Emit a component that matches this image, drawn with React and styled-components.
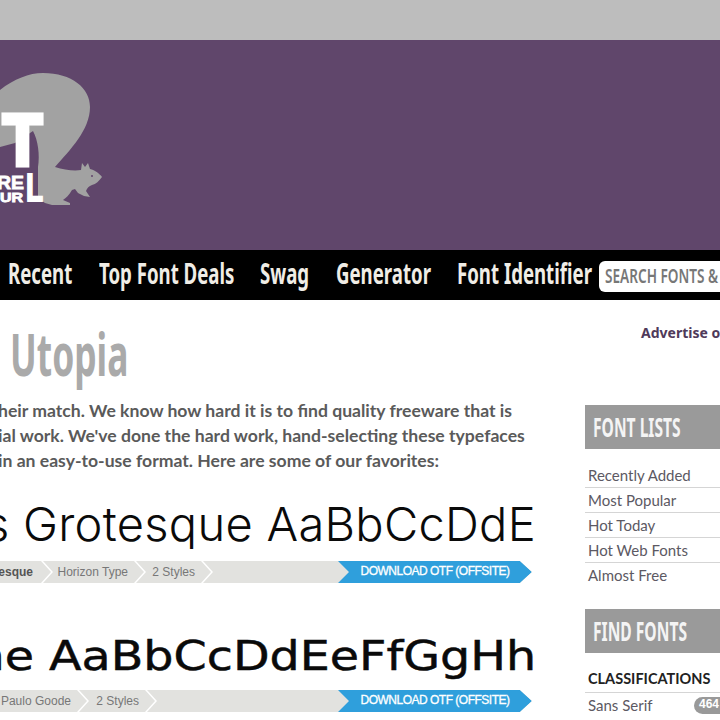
import React from 'react';
import styled, { createGlobalStyle } from 'styled-components';

const Global = createGlobalStyle`
    html, body {
        margin: 0;
        padding: 0;
        background: #fff;
        overflow: hidden;
    }
`;

const narrow = `'Noto Sans', 'Open Sans', sans-serif`;
const body = `'Lato', 'Noto Sans', sans-serif`;
const arial = `'Liberation Sans', Arial, sans-serif`;

const Page = styled.div`
    width: 720px;
    height: 720px;
    overflow: hidden;
`;

const TopBar = styled.div`
    height: 40px;
    background: #bdbdbd;
`;

const Header = styled.header`
    height: 210px;
    background: #60466b;
`;

const LogoArt = styled.svg`
    display: block;
    width: 110px;
    height: 210px;
`;

// no condensed family is installed, so the headline face is squeezed horizontally
const Squeeze = styled.span`
    display: block;
    white-space: nowrap;
    transform: scaleX(${p => p.$k});
    transform-origin: ${p => p.$origin || 'left'} center;
`;

const Nav = styled.nav`
    height: 50px;
    background: #000;
    display: flex;
    align-items: center;
    padding-left: 8px;
    white-space: nowrap;
`;

const NavItem = styled.a`
    flex: none;
    width: ${p => p.$width}px;
    margin-right: 26.5px;
    margin-bottom: 4px;
    font-family: ${narrow};
    font-weight: 700;
    font-size: 28px;
    line-height: 38px;
    color: #f0ede6;
    &:last-of-type {
        margin-right: 6px;
    }
`;

const Search = styled.div`
    flex: none;
    width: 140px;
    height: 31px;
    margin-top: 2px;
    background: #fff;
    border-radius: 6px;
    padding-left: 6px;
    box-sizing: border-box;
    font-family: ${narrow};
    font-weight: 600;
    font-size: 20px;
    line-height: 30px;
    color: #777;
`;

const Main = styled.div`
    display: flex;
    height: 420px;
`;

const Content = styled.main`
    width: 585px;
    flex: none;
    overflow: hidden;
`;

const Title = styled.h1`
    margin: 22px 0 0 10px;
    font-family: ${narrow};
    font-weight: 700;
    font-size: 60px;
    line-height: 62px;
    color: #aaa;
`;

const Intro = styled.p`
    margin: 14px 0 0;
    width: 560px;
    font-family: ${body};
    font-weight: 700;
    font-size: 17.6px;
    line-height: 25px;
    color: #5a5a5a;
    white-space: nowrap;
`;

const Line = styled.span`
    display: block;
    margin-left: ${p => p.$shift}px;
`;

const Specimen = styled.div`
    margin-top: ${p => p.$top}px;
    width: 536px;
    height: 52px;
    display: flex;
    justify-content: flex-end;
    align-items: center;
    font-family: ${p => p.$family};
    font-weight: ${p => p.$weight};
    font-size: ${p => p.$size}px;
    letter-spacing: ${p => p.$spacing}px;
    -webkit-text-stroke: ${p => p.$stroke}px #0a0a0a;
    color: #0a0a0a;
    white-space: nowrap;
    overflow: hidden;
`;

const Crumbs = styled.div`
    margin-top: ${p => p.$top}px;
    width: 532px;
    height: 22px;
    display: flex;
    align-items: center;
    background: #e2e2df;
    clip-path: polygon(0 0, 520px 0, 532px 50%, 520px 100%, 0 100%);
`;

const Crumb = styled.span`
    font-family: ${arial};
    font-size: 12px;
    font-weight: ${p => (p.$strong ? 700 : 400)};
    color: ${p => (p.$strong ? '#555' : '#777')};
    flex: none;
    width: ${p => p.$width}px;
    height: 22px;
    line-height: 22px;
    box-sizing: border-box;
    display: flex;
    justify-content: flex-end;
    white-space: nowrap;
    padding-right: ${p => (p.$strong ? 20 : 18)}px;
    position: relative;
    &::after {
        content: '';
        position: absolute;
        right: 0;
        top: 0;
        width: 12px;
        height: 22px;
        background: #fff;
        clip-path: polygon(0 0, 2px 0, 12px 50%, 2px 100%, 0 100%, 10px 50%);
    }
`;

const Download = styled.a`
    margin-left: auto;
    width: 194px;
    height: 22px;
    background: #2f9fdc;
    clip-path: polygon(0 0, 182px 0, 194px 50%, 182px 100%, 0 100%, 11px 50%);
    font-family: ${arial};
    font-size: 12px;
    letter-spacing: -0.5px;
    line-height: 21px;
    color: #fff;
    text-align: center;
    white-space: nowrap;
    -webkit-text-stroke: 0.3px #fff;
`;

const Aside = styled.aside`
    flex: 1;
    min-width: 0;
    overflow: hidden;
`;

const Advertise = styled.div`
    margin: 24px 0 0 56px;
    font-family: 'Noto Sans', sans-serif;
    font-weight: 700;
    font-size: 14px;
    line-height: 18px;
    color: #4f3a5a;
    white-space: nowrap;
`;

const BoxTitle = styled.div`
    margin-top: ${p => p.$top}px;
    height: 44px;
    padding-left: 8px;
    background: #9a9a9a;
    font-family: ${narrow};
    font-weight: 700;
    font-size: 26px;
    line-height: 45px;
    color: #f4f4f4;
`;

const List = styled.ul`
    list-style: none;
    margin: 14px 0 0;
    padding: 0;
`;

const Item = styled.li`
    height: 25px;
    box-sizing: border-box;
    padding-left: 3px;
    border-bottom: 1px solid #d5d5d5;
    font-family: ${body};
    font-size: 15px;
    line-height: 24px;
    color: #5c5963;
    display: flex;
    justify-content: space-between;
    &:last-child {
        border-bottom: none;
    }
`;

const Heading = styled(Item)`
    height: 26px;
    font-size: 14.5px;
    font-weight: 700;
    color: #222;
`;

const Count = styled.span`
    height: 17px;
    margin-top: 4px;
    padding: 0 1px 0 5px;
    border-radius: 9px 0 0 9px;
    background: #999;
    font-family: ${arial};
    font-weight: 700;
    font-size: 12px;
    line-height: 15px;
    color: #fff;
`;

const navItems = [
    { label: 'Recent', width: 64 },
    { label: 'Top Font Deals', width: 135 },
    { label: 'Swag', width: 49 },
    { label: 'Generator', width: 95 },
    { label: 'Font Identifier', width: 136 },
];

const fonts = [
    {
        top: 24,
        gap: 12,
        text: 's Grotesque AaBbCcDdE',
        family: `'Inter', sans-serif`,
        weight: 300,
        size: 47,
        spacing: 0.3,
        stretch: 1,
        stroke: 0,
        crumbs: [
            { label: 'tesque', width: 53, strong: true },
            { label: 'Horizon Type', width: 93 },
            { label: '2 Styles', width: 67 },
        ],
    },
    {
        top: 47,
        gap: 8,
        text: 'ne AaBbCcDdEeFfGgHh',
        family: `'DejaVu Sans', sans-serif`,
        weight: 400,
        size: 41,
        spacing: 0,
        stretch: 1.16,
        stroke: 0.5,
        crumbs: [
            { label: 'Paulo Goode', width: 89 },
            { label: '2 Styles', width: 68 },
        ],
    },
];

const lists = ['Recently Added', 'Most Popular', 'Hot Today', 'Hot Web Fonts', 'Almost Free'];

export default function App() {
    return (
        <Page>
            <Global />
            <TopBar />
            <Header>
                <LogoArt viewBox="0 40 110 210">
                    <path
                        fill="#a2a2a2"
                        d="M0 90C14 79 29 73 43 73C72 73 90 88 90 107C90 130 70 150 55 167C64 170 74 171 81 170L82 163L85 167L88 163L90 169C95 170 100 174 102 177C99 181 96 184 92 185C89 186 87 188 86 191L90 197L84 196L78 193L75 189L72 190C69 195 66 198 63 200L70 203L70 205L52 205L45 203L38 198L38 167C40 155 38 140 33 131L15 143L0 147Z"
                    />
                    <circle cx="92" cy="176" r="1" fill="#60466b" />
                    <text x="3" y="165" textLength="39" lengthAdjust="spacingAndGlyphs" fontFamily="Liberation Sans" fontWeight="700" fontSize="72" fill="#fff" stroke="#fff" strokeWidth="5">T</text>
                    <text x="-3" y="189" textLength="27" lengthAdjust="spacingAndGlyphs" fontFamily="Liberation Sans" fontWeight="700" fontSize="19" fill="#fff" stroke="#fff" strokeWidth="0.8">RE</text>
                    <text x="0" y="202" textLength="23" lengthAdjust="spacingAndGlyphs" fontFamily="Liberation Sans" fontWeight="700" fontSize="12" fill="#fff" stroke="#fff" strokeWidth="0.8">UR</text>
                    <text x="26" y="201" textLength="17" lengthAdjust="spacingAndGlyphs" fontFamily="Liberation Sans" fontWeight="700" fontSize="38" fill="#fff" stroke="#fff" strokeWidth="2">L</text>
                </LogoArt>
            </Header>
            <Nav>
                {navItems.map(item => (
                    <NavItem key={item.label} $width={item.width}>
                        <Squeeze $k={0.665}>{item.label}</Squeeze>
                    </NavItem>
                ))}
                <Search>
                    <Squeeze $k={0.68}>SEARCH FONTS &amp;</Squeeze>
                </Search>
            </Nav>
            <Main>
                <Content>
                    <Title>
                        <Squeeze $k={0.59}>Utopia</Squeeze>
                    </Title>
                    <Intro>
                        <Line $shift={-2}>heir match. We know how hard it is to find quality freeware that is</Line>
                        <Line $shift={-2}>ial work. We've done the hard work, hand-selecting these typefaces</Line>
                        <Line $shift={-2}>in an easy-to-use format. Here are some of our favorites:</Line>
                    </Intro>
                    {fonts.map(font => (
                        <div key={font.text}>
                            <Specimen $top={font.top} $family={font.family} $weight={font.weight} $size={font.size} $spacing={font.spacing} $stroke={font.stroke}>
                                <Squeeze $k={font.stretch} $origin="right">{font.text}</Squeeze>
                            </Specimen>
                            <Crumbs $top={font.gap}>
                                {font.crumbs.map(c => (
                                    <Crumb key={c.label} $width={c.width} $strong={c.strong}>{c.label}</Crumb>
                                ))}
                                <Download>DOWNLOAD OTF (OFFSITE)</Download>
                            </Crumbs>
                        </div>
                    ))}
                </Content>
                <Aside>
                    <Advertise>Advertise on this site</Advertise>
                    <BoxTitle $top={63}>
                        <Squeeze $k={0.6}>FONT LISTS</Squeeze>
                    </BoxTitle>
                    <List>
                        {lists.map(l => <Item key={l}>{l}</Item>)}
                    </List>
                    <BoxTitle $top={21}>
                        <Squeeze $k={0.6}>FIND FONTS</Squeeze>
                    </BoxTitle>
                    <List>
                        <Heading>CLASSIFICATIONS</Heading>
                        <Item>Sans Serif<Count>464</Count></Item>
                    </List>
                </Aside>
            </Main>
        </Page>
    );
}
